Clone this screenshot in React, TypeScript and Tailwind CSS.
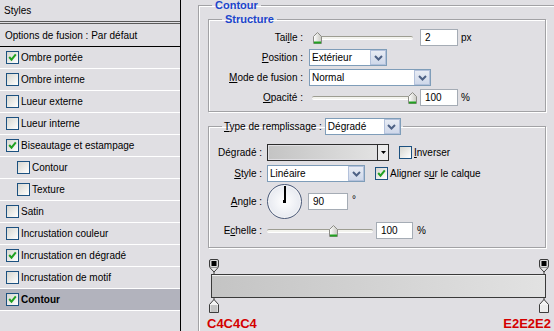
import type { ReactNode } from "react"

const Check = ({ checked }: { checked?: boolean }) => (
  <span className="w-[13px] h-[13px] shrink-0 border border-[#1c5180] bg-linear-to-br from-[#d6d6d0] to-white flex items-center justify-center">
    {checked && (
      <svg width="9" height="9" viewBox="0 0 9 9">
        <path d="M1.2 4 L3.5 6.6 L7.8 1.4" stroke="#21a121" strokeWidth="2" fill="none" />
      </svg>
    )}
  </span>
)

const Chevron = () => (
  <svg width="9" height="6" viewBox="0 0 9 6">
    <path d="M1 1 L4.5 4.5 L8 1" stroke="#4d6185" strokeWidth="2" fill="none" />
  </svg>
)

const Select = ({ value, width }: { value: string; width: string }) => (
  <div className={`${width} h-[17px] border border-[#7f9db9] bg-white flex items-center`}>
    <span className="flex-1 pl-[2px] leading-[15px]">{value}</span>
    <span className="w-[16px] h-[15px] border border-[#b3c1db] bg-linear-to-b from-[#e8ecf4] to-[#cfd8ea] flex items-center justify-center">
      <Chevron />
    </span>
  </div>
)

const Input = ({ value, width }: { value: string; width: string }) => (
  <div className={`${width} h-[17px] border border-[#a5acb5] bg-white pl-[4px] leading-[15px]`}>{value}</div>
)

const Thumb = () => (
  <svg width="9" height="12" viewBox="0 0 9 12">
    <defs>
      <linearGradient id="th" x1="0" y1="0" x2="1" y2="0">
        <stop offset="0" stopColor="#ffffff" />
        <stop offset="1" stopColor="#c9c9c2" />
      </linearGradient>
    </defs>
    <path d="M0.5 4.5 L4.5 0.5 L8.5 4.5 L8.5 11.5 L0.5 11.5 Z" fill="url(#th)" stroke="#8c8c86" />
    <path d="M1 10.5 L8 10.5" stroke="#21a121" strokeWidth="2" />
  </svg>
)

const Slider = ({ width, pos }: { width: string; pos: string }) => (
  <div className={`${width} h-[12px] relative flex items-center`}>
    <div className="w-full h-[4px] border-t border-[#9d9d92] border-b border-b-white bg-[#f3f3ee] rounded-[2px]" />
    <span className={`absolute top-0 ${pos}`}>
      <Thumb />
    </span>
  </div>
)

const Label = ({ children }: { children: ReactNode }) => <span className="whitespace-nowrap">{children}</span>

const Row = ({ label, checked, indent, selected }: { label: string; checked?: boolean; indent?: boolean; selected?: boolean }) => (
  <div
    className={`h-[22px] border-b border-white flex items-center gap-[2px] ${indent ? "pl-[17px]" : "pl-[6px]"} ${
      selected ? "bg-[#b2b3bd] font-bold" : ""
    }`}
  >
    <Check checked={checked} />
    <span>{label}</span>
  </div>
)

const Etched = "border border-[#a2a2a5] shadow-[1px_1px_0_white,inset_1px_1px_0_white]"

const StopTop = () => (
  <svg width="10" height="15" viewBox="0 0 10 15">
    <rect x="0.5" y="0.5" width="9" height="8" rx="1.5" fill="#d9d9d9" stroke="#3c3c3c" />
    <rect x="2.5" y="2" width="5" height="5" fill="#000" />
    <path d="M0.8 8.5 L5 13 L9.2 8.5" fill="#e8e8e8" stroke="#3c3c3c" />
    <path d="M5 13 L5 15" stroke="#3c3c3c" />
  </svg>
)

const StopBottom = ({ fill }: { fill: string }) => (
  <svg width="10" height="15" viewBox="0 0 10 15">
    <path d="M5 0 L5 2" stroke="#3c3c3c" />
    <path d="M5 1.5 L9.5 6.5 L9.5 14.5 L0.5 14.5 L0.5 6.5 Z" fill="#f4f4f4" stroke="#3c3c3c" />
    <rect x="1.5" y="7" width="7" height="7" fill={fill} />
  </svg>
)

export default function App() {
  return (
    <div className="w-[554px] h-[331px] overflow-hidden bg-[#e0dfe3] flex font-['Liberation_Sans',Arial,sans-serif] text-[10px] text-black">
      <aside className="w-[181px] shrink-0 border-r border-black flex flex-col">
        <div className="h-[22px] border-b border-[#5a5a5a] pl-[4px] flex items-center">Styles</div>
        <div className="h-[1px]" />
        <div className="h-[24px] border-t border-[#5a5a5a] border-b border-b-black pl-[5px] flex items-center">
          Options de fusion : Par défaut
        </div>
        <Row label="Ombre portée" checked />
        <Row label="Ombre interne" />
        <Row label="Lueur externe" />
        <Row label="Lueur interne" />
        <Row label="Biseautage et estampage" checked />
        <Row label="Contour" indent />
        <Row label="Texture" indent />
        <Row label="Satin" />
        <Row label="Incrustation couleur" />
        <Row label="Incrustation en dégradé" checked />
        <Row label="Incrustation de motif" />
        <Row label="Contour" checked selected />
      </aside>

      <main className="flex-1 pl-[17px]">
        <fieldset className={`w-[400px] h-[360px] px-[9px] pt-[2px] ${Etched}`}>
          <legend className="ml-[4px] px-[3px] leading-[11px] text-[11px] font-bold text-[#1b45cc]">Contour</legend>

          <fieldset className={`w-[338px] pt-[3px] pb-[5px] ${Etched}`}>
            <legend className="ml-[13px] px-[3px] leading-[13px] text-[11px] font-bold text-[#1b45cc]">Structure</legend>
            <div className="grid grid-cols-[100px_1fr] gap-y-[3px] items-center">
              <span className="text-right pr-[6px]">
                <Label>
                  Tai<u>l</u>le :
                </Label>
              </span>
              <div className="flex items-center h-[17px] pl-[4px]">
                <Slider width="w-[100px]" pos="left-0" />
                <span className="ml-[7px]">
                  <Input value="2" width="w-[38px]" />
                </span>
                <span className="ml-[3px]">px</span>
              </div>

              <span className="text-right pr-[6px]">
                <Label>
                  <u>P</u>osition :
                </Label>
              </span>
              <Select value="Extérieur" width="w-[78px]" />

              <span className="text-right pr-[6px]">
                <Label>
                  <u>M</u>ode de fusion :
                </Label>
              </span>
              <Select value="Normal" width="w-[122px]" />

              <span className="text-right pr-[6px]">
                <Label>
                  <u>O</u>pacité :
                </Label>
              </span>
              <div className="flex items-center h-[17px] pl-[3px]">
                <Slider width="w-[101px]" pos="right-[-4px]" />
                <span className="ml-[7px]">
                  <Input value="100" width="w-[38px]" />
                </span>
                <span className="ml-[3px]">%</span>
              </div>
            </div>
          </fieldset>

          <fieldset className={`w-[338px] mt-[6px] pt-[9px] pb-[8px] ${Etched}`}>
            <legend className="ml-[13px] px-[2px] flex items-center gap-[3px] h-[17px]">
              <Label>
                <u>T</u>ype de remplissage :
              </Label>
              <Select value="Dégradé" width="w-[76px]" />
            </legend>
            <div className="grid grid-cols-[53px_1fr] gap-x-[5px] items-center">
              <span className="text-right whitespace-nowrap">Dégradé :</span>
              <div className="flex items-center">
                <div className="w-[122px] h-[17px] border border-[#2c2c2c] flex">
                  <div className="flex-1 m-[1px] bg-linear-to-r from-[#c4c4c4] to-[#e2e2e2]" />
                  <div className="w-[11px] border-l border-[#2c2c2c] bg-[#ececec] flex items-center justify-center">
                    <svg width="5" height="3" viewBox="0 0 5 3">
                      <path d="M0 0 L5 0 L2.5 3 Z" fill="#000" />
                    </svg>
                  </div>
                </div>
                <span className="ml-[10px]">
                  <Check />
                </span>
                <span className="ml-[2px]">
                  <u>I</u>nverser
                </span>
              </div>

              <span className="text-right mt-[4px]">
                <u>S</u>tyle :
              </span>
              <div className="flex items-center mt-[4px]">
                <Select value="Linéaire" width="w-[98px]" />
                <span className="ml-[10px]">
                  <Check checked />
                </span>
                <span className="ml-[2px] whitespace-nowrap">
                  Aligner s<u>u</u>r le calque
                </span>
              </div>

              <span className="text-right mt-[2px]">
                <u>A</u>ngle :
              </span>
              <div className="flex items-center mt-[2px]">
                <div className="w-[35px] h-[35px] rounded-full border border-[#4b5a78] bg-radial from-white to-[#dde1ea] flex justify-center shadow-[inset_0_0_0_1px_#f8f8f8] relative">
                  <div className="w-[2px] h-[17px] mt-[1px] bg-black" />
                  <span className="absolute left-[15px] top-[15px] w-[3px] h-[3px] bg-black" />
                </div>
                <span className="ml-[6px]">
                  <Input value="90" width="w-[40px]" />
                </span>
                <span className="ml-[4px] self-start mt-[8px]">°</span>
              </div>

              <span className="text-right mt-[3px]">
                E<u>c</u>helle :
              </span>
              <div className="flex items-center mt-[3px]">
                <Slider width="w-[106px]" pos="left-[62px]" />
                <span className="ml-[3px]">
                  <Input value="100" width="w-[37px]" />
                </span>
                <span className="ml-[4px]">%</span>
              </div>
            </div>
          </fieldset>

          <div className="w-[344px] ml-[-1px] mt-[11px]">
            <div className="flex justify-between px-[2px]">
              <StopTop />
              <StopTop />
            </div>
            <div className="h-[24px] ml-[4px] mr-[5px] border border-[#3a3a3a] bg-linear-to-r from-[#c4c4c4] to-[#e2e2e2] shadow-[inset_0_1px_0_#f0f0f0]" />
            <div className="flex justify-between px-[2px]">
              <StopBottom fill="#c4c4c4" />
              <StopBottom fill="#ececec" />
            </div>
            <div className="flex justify-between mt-[5px] text-[13px] leading-[12px] font-bold text-[#d40000]">
              <span>C4C4C4</span>
              <span>E2E2E2</span>
            </div>
          </div>
        </fieldset>
      </main>
    </div>
  )
}
